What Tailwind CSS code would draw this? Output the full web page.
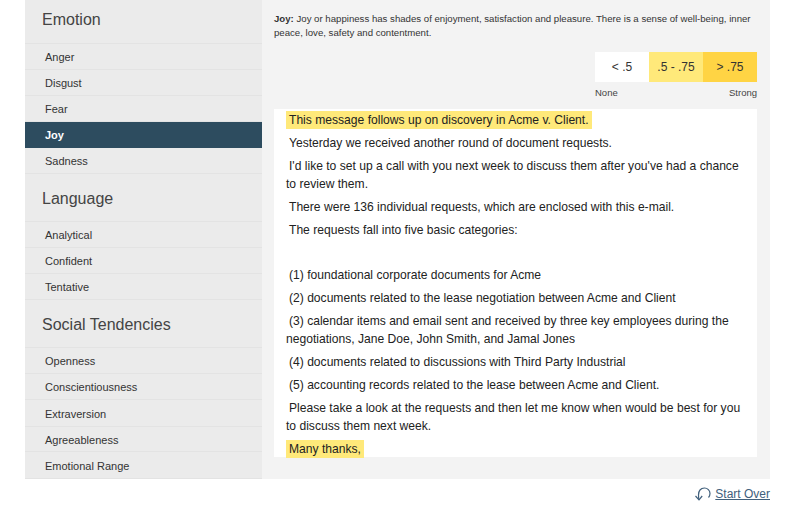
<html>
  <head>
    <meta charset="utf-8">
    <title>Tone Analyzer</title>
    <script src="https://cdn.jsdelivr.net/npm/@tailwindcss/browser@4"></script>
  </head>
  <body class="bg-white font-['Liberation_Sans',sans-serif] text-[#333] overflow-hidden">
    <div class="pl-[25px] w-[770px]">
      <div class="flex h-[479px] overflow-hidden">
        <!-- sidebar -->
        <aside class="w-[237px] h-[484px] -mt-[5px] shrink-0 bg-[#ebebeb] text-[11px]">
          <h2 class="h-[49px] pl-[17px] pt-[1px] flex items-center text-[16px] text-[#444] border-b border-[#e3e3e3]">Emotion</h2>
          <ul>
            <li class="h-[26px] pl-[20px] pt-[2px] flex items-center border-b border-[#e3e3e3]">Anger</li>
            <li class="h-[26px] pl-[20px] pt-[2px] flex items-center border-b border-[#e3e3e3]">Disgust</li>
            <li class="h-[26px] pl-[20px] pt-[2px] flex items-center border-b border-[#e3e3e3]">Fear</li>
            <li class="h-[26px] pl-[20px] flex items-center bg-[#2d4c5f] text-white font-bold">Joy</li>
            <li class="h-[26px] pl-[20px] pt-[2px] flex items-center border-b border-[#e3e3e3]">Sadness</li>
          </ul>
          <h2 class="h-[48px] pl-[17px] pt-[2px] flex items-center text-[16px] text-[#444] border-b border-[#e3e3e3]">Language</h2>
          <ul>
            <li class="h-[26px] pl-[20px] pt-[2px] flex items-center border-b border-[#e3e3e3]">Analytical</li>
            <li class="h-[26px] pl-[20px] pt-[2px] flex items-center border-b border-[#e3e3e3]">Confident</li>
            <li class="h-[26px] pl-[20px] pt-[2px] flex items-center border-b border-[#e3e3e3]">Tentative</li>
          </ul>
          <h2 class="h-[48px] pl-[17px] pt-[2px] flex items-center text-[16px] text-[#444] border-b border-[#e3e3e3]">Social Tendencies</h2>
          <ul>
            <li class="h-[26px] pl-[20px] pt-[2px] flex items-center border-b border-[#e3e3e3]">Openness</li>
            <li class="h-[26px] pl-[20px] pt-[2px] flex items-center border-b border-[#e3e3e3]">Conscientiousness</li>
            <li class="h-[27px] pl-[20px] pt-[2px] flex items-center border-b border-[#e3e3e3]">Extraversion</li>
            <li class="h-[25px] pl-[20px] pt-[2px] flex items-center border-b border-[#e3e3e3]">Agreeableness</li>
            <li class="h-[27px] pl-[20px] pt-[2px] flex items-center border-b border-[#e3e3e3]">Emotional Range</li>
          </ul>
        </aside>
        <!-- main -->
        <main class="flex-1 bg-[#f3f3f3] pl-[12px] pr-[13px] pt-[12px]">
          <p class="text-[9.65px] leading-[14px] text-[#333]"><b>Joy:</b> Joy or happiness has shades of enjoyment, satisfaction and pleasure. There is a sense of well-being, inner peace, love, safety and contentment.</p>
          <div class="mt-[12px] ml-auto w-[162px]">
            <div class="grid grid-cols-3 h-[30px] text-[12px] text-center leading-[30px]">
              <div class="bg-white">&lt; .5</div>
              <div class="bg-[#ffe97a]">.5 - .75</div>
              <div class="bg-[#ffd444]">&gt; .75</div>
            </div>
            <div class="flex justify-between mt-[5px] text-[9.5px] leading-[12px] text-[#444]"><span>None</span><span>Strong</span></div>
          </div>
          <div class="mt-[10px] h-[348px] bg-white pl-[12px] pr-[8px] pt-[2px] text-[12.1px] leading-[18px] text-[#222] [&>p]:mb-[5px]">
            <p><span class="inline-block align-top bg-[#ffe97a] px-[3px]">This message follows up on discovery in Acme v. Client.</span></p>
            <p><span class="px-[3px]">Yesterday we received another round of document requests.</span></p>
            <p><span class="pl-[3px]">I'd like to set up a call with you next week to discuss them after you've had a chance to review them.</span></p>
            <p><span class="px-[3px]">There were 136 individual requests, which are enclosed with this e-mail.</span></p>
            <p><span class="px-[3px]">The requests fall into five basic categories:</span></p>
            <p class="h-[17px]"></p>
            <p><span class="px-[3px]">(1) foundational corporate documents for Acme</span></p>
            <p><span class="px-[3px]">(2) documents related to the lease negotiation between Acme and Client</span></p>
            <p><span class="pl-[3px]">(3) calendar items and email sent and received by three key employees during the negotiations, Jane Doe, John Smith, and Jamal Jones</span></p>
            <p><span class="px-[3px]">(4) documents related to discussions with Third Party Industrial</span></p>
            <p><span class="px-[3px]">(5) accounting records related to the lease between Acme and Client.</span></p>
            <p><span class="pl-[3px]">Please take a look at the requests and then let me know when would be best for you to discuss them next week.</span></p>
            <p><span class="inline-block align-top bg-[#ffe97a] px-[3px]">Many thanks,</span></p>
          </div>
        </main>
      </div>
      <div class="flex justify-end items-center gap-[4px] h-[30px] text-[12px] text-[#41607c]">
        <svg class="w-[17px] h-[14px]" viewBox="0 0 17 14" fill="none" stroke="#41607c" stroke-width="1.2">
          <path d="M5 12.5 C4.5 11 4.5 9.5 4.5 8 C4.5 3.5 7 1 10.5 1 C13.5 1 16 3.5 16 6.5 C16 8 15.4 9.5 14.5 10.5"/>
          <path d="M1.5 9 L5 12.8 L8.2 9"/>
        </svg>
        <a href="#" class="underline">Start Over</a>
      </div>
    </div>
  </body>
</html>
